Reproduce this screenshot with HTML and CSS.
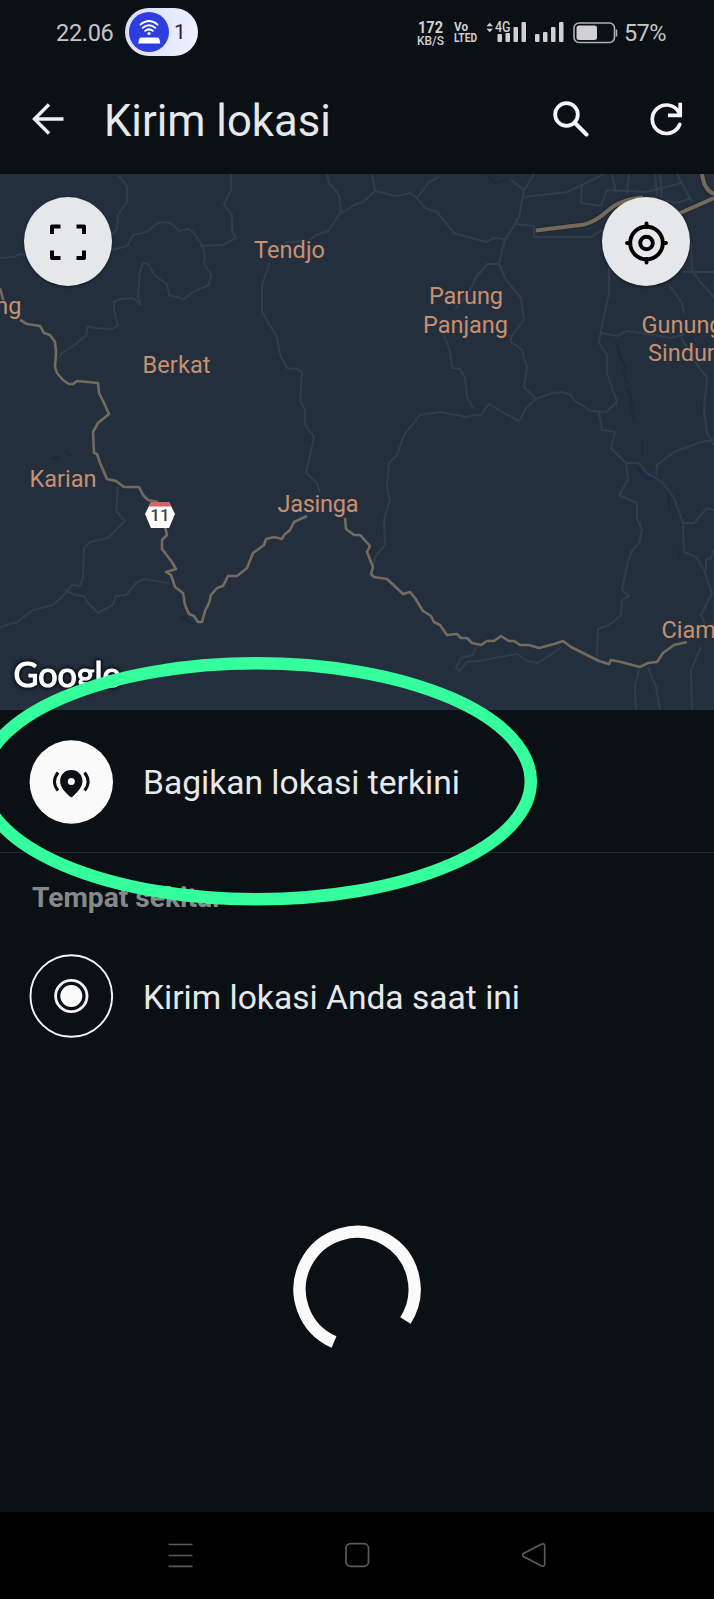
FILE: index.html
```html
<!DOCTYPE html>
<html lang="id">
<head>
<meta charset="utf-8">
<title>Kirim lokasi</title>
<link rel="stylesheet" href="styles.css">
</head>
<body>
<div class="screen">
  <header class="status-bar">
    <span class="clock">22.06</span>
    <div class="hotspot">
      <svg class="hotspot-icon" width="40" height="40" viewBox="0 0 40 40">
        <circle cx="20" cy="20" r="20" fill="#2d3ddf"/>
        <g fill="none" stroke="#fff" stroke-width="2" stroke-linecap="round">
          <path d="M11.500 12.500Q20 5.500 28.500 12.500M13.800 15.800Q20 10.800 26.200 15.800M16.300 18.800Q20 16 23.700 18.800"/>
        </g>
        <circle cx="20" cy="21.500" r="1.600" fill="#fff"/>
        <path d="M12 25.500h16.500q1.500 0 2 2l.8 4h-22.100l.8-4q.5-2 2-2z" fill="#fff"/>
      </svg>
      <span>1</span>
    </div>
    <div class="status-right">
      <svg class="indicators" width="148" height="28" viewBox="0 0 148 28" fill="#cfd1d3">
        <text class="speed" x="1" y="13" textLength="25" lengthAdjust="spacingAndGlyphs">172</text>
        <text class="unit" x="0" y="24.500" textLength="27" lengthAdjust="spacingAndGlyphs">KB/S</text>
        <text class="volte" x="37" y="11" textLength="14" lengthAdjust="spacingAndGlyphs">Vo</text>
        <text class="volte" x="37" y="22" textLength="23" lengthAdjust="spacingAndGlyphs">LTED</text>
        <path d="M69.500 6.300L72.700 2.800L76 6.300zM69.500 8.800L72.700 12.300L76 8.800z"/>
        <text class="net-type" x="78" y="11.500" textLength="15.500" lengthAdjust="spacingAndGlyphs">4G</text>
        <rect x="80.500" y="14" width="4.500" height="8" rx="1"/><rect x="88.500" y="13" width="4.500" height="9" rx="1"/><rect x="96.500" y="7" width="4.500" height="15" rx="1"/><rect x="104.500" y="2" width="4.500" height="20" rx="1"/>
        <rect x="118" y="14" width="4.500" height="8" rx="1"/><rect x="126" y="12" width="4.500" height="10" rx="1"/><rect x="134" y="7" width="4.500" height="15" rx="1"/><rect x="142" y="2" width="4.500" height="20" rx="1"/>
      </svg>
      <svg class="battery" width="45" height="22" viewBox="0 0 45 22">
        <rect x="1" y="1" width="40.500" height="19.500" rx="5" fill="none" stroke="#aeb1b4" stroke-width="1.600"/>
        <rect x="3.500" y="3.500" width="20.500" height="14.500" rx="2.500" fill="#cfd1d3"/>
        <path d="M43.500 7.500v7" stroke="#aeb1b4" stroke-width="1.500"/>
      </svg>
      <span class="percent">57%</span>
    </div>
  </header>

  <div class="app-bar">
    <svg class="back" width="32" height="32" viewBox="0 0 32 32" fill="none" stroke="#eef1f3" stroke-width="3.400"><path d="M31.500 16H2M17 1.500L2.500 16L17 30.500"/></svg>
    <h1>Kirim lokasi</h1>
    <svg class="search" width="36" height="36" viewBox="0 0 36 36" fill="none" stroke="#f3f5f6"><circle cx="13.500" cy="13.500" r="11.300" stroke-width="3.800"/><path d="M21.500 21.500L33.500 33.500" stroke-width="4" stroke-linecap="round"/></svg>
    <svg class="refresh" width="34" height="34" viewBox="0 0 34 34" fill="none" stroke="#f3f5f6" stroke-width="3.700" stroke-linecap="round"><path d="M29.700 22.500A14.200 14.200 0 1 1 29 10.500"/><path d="M30.200 2.500V13.400H19.800" stroke-linecap="square"/></svg>
  </div>

  <section class="map">
    <svg class="map-canvas" width="714" height="536" viewBox="0 174 714 536">
      <g class="water">
        <path d="M617 344l3 13l6 9l-3 8l5 10M626 388l5 9l1 18l3 7M642 440v14M636 467l12 12l8-2M669 490v22M679 550v8M486 175l10 8l8-2M181 616l12 9M52 459l8-2M66 452l6 4"/>
      </g>
      <g class="minor">
        <path d="M119 176l8 10v16l-9 13l-1 14l-5 6M0 258l14-1l6-3l6 1M112 250l15-4l6-11l14-3l11-9l7-1l7 2l7 7l9-2l5 3l9 13l3 10l-1 9l7 10l-2 11l-16 7l-9 7l-15-4l-2-11l-12-8l-7-12l-5-1l-3 9l-2 25l3 8l-8-7l-13 1l-6 3v8l4 15l-5 4l-20-1l-5-2l-2 9l-10 9l-14 9l-9 12M231 174v16l-7 15l8 10v16l4 7l-13 7l-23 1"/>
        <path d="M327 174l2 9l10 12l2 17l-13 19l-12 4l-7 6l-24 1M342 213l12-8l9-3l12-11l-3-17M375 191l22 5l13-3l7 5l12-16l10-5M417 198l8 10l12 4l17 21l21 6l11 3l8-4l12 1"/>
        <path d="M270 263l-8 22v27l15 25l3 18l7 13l10 1l5 3l-2 28l5 10v15l9 12l-8 36l11 10l3 10M479 272l-9 18l-15 20M444 335l6 17l2 16l8 1l5 9l2 19l6 11"/>
        <path d="M373 567l2-10l10-12l-1-25l6-20l-3-13l2-24l8-8l7-20l16-20l20-3l27 5l7-2l7-0l8-11l15 9l15 8l8-14l9-8l-12-12l3-19l-5-18l-11-8v-5l13-17l-3-22l-15-18l-7-16h-12l-13 16M499 264l5-22l15-25l5-27l-13-10M524 190l10-16M524 197l43-5l15-7l22-11M582 185l-1 18l20 3l6-16l40 2l34-9M516 224l18 2v11h57l11-7M506 239l13-22"/>
        <path d="M536 399l16-6l10-1l9 3l3 5l17 11l15 1l11-10l-10-29v-18l-8-12l2-13l8-37v-30M599 412l3 18l13 2l-4 16l15 15l2 17l-9 15l18 8v15l5 12l-3 13l-8 9l-5 18l-4 20l7 6l-7 4l-1 15l-12 10l-11 4l-1 28M626 463h13l8 10l15 9l12 16l9 25l1 29l12 5l8 13l8 23l-11 22l4 8M701 647l-10 23l1 40M656 475l1-10l17-13l27-10l13-2M683 523h11l13-15l7 2M714 550l-3 8l-5 2v10M639 670l-4 17l1 23M648 667l8 20l4 23"/>
        <path d="M669 285l13 18l2 10M681 337l16 28l10 12l-3 33l3 23l7 12M601 333l16 3l10-5l14 2l30 5l14-4M682 272h32M691 243l1 27l9 13l13 14M677 174l15 28M612 174l4 19M629 174l-2 20M655 174l2 22M660 174l2 23M665 200l12 3l14-5"/>
        <path d="M118 486l-2 25l9 10l-7 7l-10 10l-18 4l-6 6l-1 30l-3 8l-8-1l-8 10l-11 10l-20 5l-16 12l-20 6M64 590l12 5l8 1l4 7l10 10l15-8l3-9l10-1l10-12l8-4l25 4M476 647l-3 8l-12 3l-5 10l4 3l7-9l12-1l20-4l18-3l10 7l11 2l14-9l9-7"/>
      </g>
      <g class="highway-edge"><path d="M536 230.500l48-6q12-3 24-14t35-13M702 174q2 16 12 20M680 213l34-15"/></g>
      <g class="highway"><path d="M536 230.500l48-6q12-3 24-14t35-13M702 174q2 16 12 20M680 213l34-15"/></g>
      <g class="road">
        <path d="M0 288L4 303M20 320L27 324L40 326L44 333L50 335L55 342L56 352L55 367L57 373L63 380L69 384H73L77 381L98 383L99 393L104 403L109 414L98 423L93 432L94 453L97 454L100 463L107 479L116 481L124 487H139L143 495L148 500L158 502"/>
        <path d="M165 527L167 535L162 540V549L172 562L176 569L166 572L171 575L175 587L183 593L185 605L189 614L194 616L198 622H202L205 611L209 603L211 595L217 588L223 586L228 576H237L247 568L253 553L264 545L266 539L274 537L282 539L284 535L290 530L294 522L307 516"/>
        <path d="M345 518L346 529L354 535H360L370 546L367 552L373 567L371 574L374 577L387 579L403 594L410 592L415 598L423 611L431 616L434 622L440 625L447 635L457 634L461 638H467L472 643L481 645L487 641H494L501 636L509 641H514L520 645H529L539 648L554 644L563 641L571 647L599 661L609 664L611 660L621 662L640 667L648 663L657 662L663 653L674 645L687 642"/>
      </g>
      <g class="place">
        <text x="254" y="258" textLength="71">Tendjo</text>
        <text x="429" y="303.500" textLength="74">Parung</text>
        <text x="423" y="332.500" textLength="85">Panjang</text>
        <text x="142.500" y="372.500" textLength="68">Berkat</text>
        <text x="21.500" y="314" text-anchor="end">ng</text>
        <text x="29.500" y="486.500" textLength="67">Karian</text>
        <text x="277.500" y="511.500" textLength="81">Jasinga</text>
        <text x="641.500" y="332.500">Gunung</text>
        <text x="648" y="361">Sindur</text>
        <text x="661.500" y="638">Ciam</text>
      </g>
      <path d="M151 502h18l6 12l-6 14h-18l-6-14z" fill="#fff"/>
      <path d="M151 502h18l2.200 4.500h-22.400z" fill="#d85f68"/>
      <text class="route" x="160" y="521">11</text>
      <text class="google" x="13.500" y="687" textLength="107" lengthAdjust="spacingAndGlyphs">Google</text>
    </svg>
    <div class="map-controls">
      <button class="round"><svg width="38" height="38" viewBox="0 0 38 38" fill="none" stroke="#000" stroke-width="4" stroke-linejoin="round"><path d="M3 11V3.500H11.500M27.500 3.500H35V11M35 27.500V35H27.500M11.500 35H3V27.500"/></svg></button>
      <button class="round"><svg class="target" width="44" height="44" viewBox="0 0 44 44" fill="none" stroke="#000" stroke-width="3.900"><circle cx="22.500" cy="22" r="16.300"/><circle cx="22.500" cy="22" r="6.300"/><path d="M22.500 2.500V6M22.500 38v3.500M3 22H6M39 22h3" stroke-linecap="round"/></svg></button>
    </div>
  </section>

  <div class="row live">
    <svg class="avatar" width="84" height="84" viewBox="0 0 84 84">
      <circle cx="42.300" cy="42" r="41.700" fill="#fafafa"/>
      <path d="M42.300 30C35.800 30 31.100 34.800 31.100 41C31.100 47.500 36 52 40.800 56.500Q42.300 58 43.800 56.500C48.300 52 53.500 47.500 53.500 41C53.500 34.800 48.800 30 42.300 30z" fill="#0b1014"/>
      <circle cx="42.300" cy="41.500" r="3.500" fill="#fafafa"/>
      <path d="M29 32.500Q22 42 29 50.500M55.600 32.500Q62.600 42 55.600 50.500" fill="none" stroke="#0b1014" stroke-width="3"/>
    </svg>
    <span>Bagikan lokasi terkini</span>
  </div>
  <h2>Tempat sekitar</h2>
  <div class="row current">
    <svg class="avatar" width="84" height="84" viewBox="0 0 84 84">
      <g fill="none" stroke="#f3f4f5"><circle cx="42.300" cy="42" r="40.800" stroke-width="1.900"/><circle cx="42.300" cy="42" r="15.700" stroke-width="2.800"/></g>
      <circle cx="42.300" cy="42" r="11" fill="#fafafa"/>
    </svg>
    <span>Kirim lokasi Anda saat ini</span>
  </div>
  <main class="loading">
    <svg width="128" height="128" viewBox="0 0 128 128"><path d="M112.400 95.500A57.500 57.500 0 1 0 41 117" fill="none" stroke="#fafafa" stroke-width="12.300"/></svg>
  </main>

  <nav class="nav-bar">
    <svg width="26" height="26" viewBox="0 0 26 26"><path d="M.5 2.500h24M.5 13.500h24M.5 24.300h24"/></svg>
    <svg width="26" height="26" viewBox="0 0 26 26"><rect x="1" y="1.700" width="22.500" height="22.600" rx="4.500"/></svg>
    <svg width="26" height="26" viewBox="0 0 26 26"><path d="M1.500 11.500L19.200 2.200Q22.700.8 22.700 4.500V21.500Q22.700 25.200 19.200 23.800L1.500 14.500Q-.4 13 1.500 11.500z"/></svg>
  </nav>

  <svg class="highlight" width="714" height="270" viewBox="0 646 714 270"><ellipse cx="256.500" cy="781.300" rx="274.300" ry="118"/></svg>
</div>
</body>
</html>
```
FILE: styles.css
```css
* { box-sizing: border-box; }
body { margin: 0; background: #0b1014; font-family: Roboto, sans-serif; color: #e6e9eb; }
svg { display: block; flex: none; }
.screen { position: relative; display: flex; flex-direction: column; width: 714px; height: 1599px; overflow: hidden; }

.status-bar { display: flex; align-items: center; height: 64px; padding: 0 48px 0 56px; color: #c3c6c8; flex: none; }
.clock { width: 69px; font-size: 23.5px; letter-spacing: -.3px; padding-top: 1px; }
.hotspot { display: flex; align-items: center; width: 73px; height: 48px; padding-left: 4px; border-radius: 24px; background: linear-gradient(100deg, #d9dcfb, #f0f1ff); color: #26282e; font-size: 21px; }
.hotspot span { margin-left: 5px; }
.status-right { display: flex; align-items: center; margin-left: auto; }
.indicators { margin-top: 4px; overflow: visible; }
.speed { font: 700 16px Roboto, sans-serif; }
.unit { font: 500 13.5px Roboto, sans-serif; }
.volte { font: 700 13.5px Roboto, sans-serif; }
.net-type { font: 500 14px Roboto, sans-serif; }
.battery { margin: 1px 0 0 8px; }
.percent { margin-left: 6px; width: 42px; font-size: 23.5px; letter-spacing: -.6px; padding-top: 1px; }

.app-bar { display: flex; align-items: center; height: 110px; padding: 0 30px 0 32px; flex: none; }
.app-bar h1 { margin: 5px auto 0 40px; font-size: 43.6px; font-weight: 400; line-height: 50px; white-space: nowrap; }
.search { margin-right: 61px; }

.map { position: relative; height: 536px; background: #242f3e; flex: none; }
.map-canvas, .map-controls { position: absolute; left: 0; top: 0; }
.map-controls { display: flex; justify-content: space-between; width: 714px; padding: 23px 24px; }
.round { display: flex; align-items: center; justify-content: center; width: 88px; height: 89px; padding: 0; border: 0; border-radius: 50%; background: #e6e7e9; box-shadow: 0 1px 3px #0008; }
.target { margin-top: 3px; }
.minor, .water, .road, .highway, .highway-edge { fill: none; stroke-linejoin: round; }
.minor { stroke: #303d4d; stroke-width: 2; }
.water { stroke: #1e2a3c; stroke-width: 2.5; }
.road { stroke: #746b5e; stroke-width: 2.6; }
.highway-edge { stroke: #1f2835; stroke-width: 6.5; }
.highway { stroke: #746a58; stroke-width: 4; }
.place { font: 23.5px Roboto, sans-serif; fill: #c98f6e; stroke: #242f3e; stroke-width: 2; paint-order: stroke; }
.route { font: 500 17px Roboto, sans-serif; fill: #444; text-anchor: middle; }
.google { font: 400 35px Lato, sans-serif; fill: #fff; stroke: #fff; stroke-width: 1.2; filter: drop-shadow(0 0 1.5px #10161d) drop-shadow(0 0 1.5px #10161d) drop-shadow(0 0 1px #10161d); }

.row { display: flex; align-items: center; gap: 30px; padding-left: 29px; font-size: 33.6px; white-space: nowrap; flex: none; }
.row span { padding-top: 3px; }
.live { height: 143px; padding-top: 1px; border-bottom: 1px solid #23282c; }
.live span { padding-top: 1px; }
h2 { margin: 27px 0 0 32px; font-size: 28.2px; line-height: 36px; font-weight: 700; color: #85898c; flex: none; }
.current { margin-top: 38px; height: 84px; }
.loading { display: flex; justify-content: center; flex: 1; padding-top: 187px; }

.nav-bar { display: flex; align-items: flex-start; gap: 151px; height: 87px; padding: 30px 0 0 168px; background: #000; flex: none; }
.nav-bar svg { fill: none; stroke: #5b5b5b; stroke-width: 1.7; }
.highlight { position: absolute; left: 0; top: 646px; fill: none; stroke: #34ff9c; stroke-width: 12.5; }
```
